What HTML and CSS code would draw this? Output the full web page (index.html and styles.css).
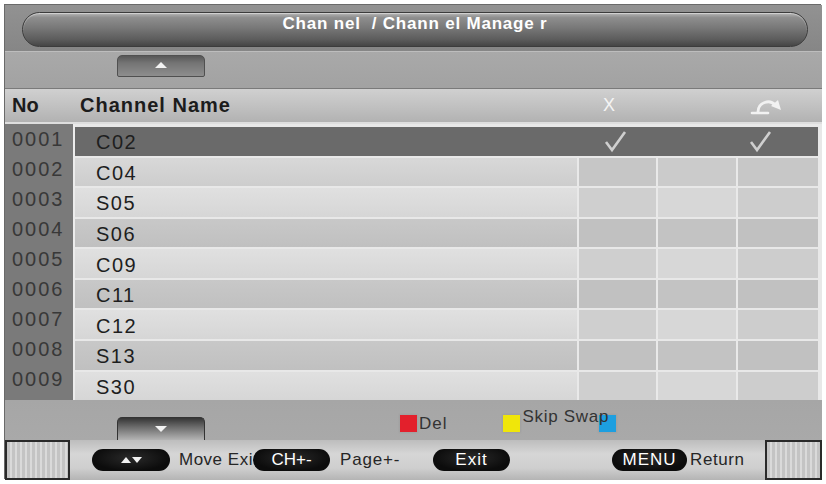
FILE: index.html
```html
<!DOCTYPE html>
<html>
<head>
<meta charset="utf-8">
<title>Channel Manager</title>
<link rel="stylesheet" href="styles.css">
</head>
<body>
<div class="frame">
  <div class="titlebar">
    <div class="pill">Chan nel &nbsp;/ Chann el Manage r</div>
  </div>
  <div class="upband">
    <div class="tab tab-up"><span class="tri tri-up"></span></div>
  </div>
  <div class="header">
    <div class="h-no">No</div>
    <div class="h-name">Channel Name</div>
    <div class="h-x">X</div>
    <div class="h-c2"></div>
    <div class="h-swap">
      <svg width="34" height="20" viewBox="0 0 34 20">
        <path d="M2 17 H18" stroke="#f2f2f2" stroke-width="2.6" fill="none" stroke-linecap="round"/>
        <path d="M8 16 C8 6 20 3 25 9" stroke="#f2f2f2" stroke-width="2.8" fill="none" stroke-linecap="round"/>
        <path d="M21 10 L31 14 L28 4 Z" fill="#f2f2f2"/>
      </svg>
    </div>
  </div>
  <div class="body">
    <div class="nums">
      <div class="num">0001</div>
      <div class="num">0002</div>
      <div class="num">0003</div>
      <div class="num">0004</div>
      <div class="num">0005</div>
      <div class="num">0006</div>
      <div class="num">0007</div>
      <div class="num">0008</div>
      <div class="num">0009</div>
    </div>
    <div class="list">
      <div class="row sel">
        <div class="name">C02</div>
        <div class="c c1"><svg class="check" width="24" height="24" viewBox="0 0 24 24"><path d="M3 13 L9 21 L22 3" stroke="#cfcfcf" stroke-width="2.6" fill="none"/></svg></div>
        <div class="c c2"></div>
        <div class="c c3"><svg class="check" width="24" height="24" viewBox="0 0 24 24"><path d="M3 13 L9 21 L22 3" stroke="#cfcfcf" stroke-width="2.6" fill="none"/></svg></div>
      </div>
      <div class="row md"><div class="name">C04</div><div class="c c1"></div><div class="c c2"></div><div class="c c3"></div></div>
      <div class="row lt"><div class="name">S05</div><div class="c c1"></div><div class="c c2"></div><div class="c c3"></div></div>
      <div class="row dk"><div class="name">S06</div><div class="c c1"></div><div class="c c2"></div><div class="c c3"></div></div>
      <div class="row lt"><div class="name">C09</div><div class="c c1"></div><div class="c c2"></div><div class="c c3"></div></div>
      <div class="row dk"><div class="name">C11</div><div class="c c1"></div><div class="c c2"></div><div class="c c3"></div></div>
      <div class="row lt"><div class="name">C12</div><div class="c c1"></div><div class="c c2"></div><div class="c c3"></div></div>
      <div class="row dk"><div class="name">S13</div><div class="c c1"></div><div class="c c2"></div><div class="c c3"></div></div>
      <div class="row lt"><div class="name">S30</div><div class="c c1"></div><div class="c c2"></div><div class="c c3"></div></div>
    </div>
  </div>
  <div class="downband">
    <div class="tab tab-down"><span class="tri tri-down"></span></div>
    <span class="sw sw-red"></span>
    <span class="lg lg-del">Del</span>
    <span class="sw sw-yellow"></span>
    <span class="lg lg-skip">Skip Swap</span>
    <span class="sw sw-blue"></span>
  </div>
  <div class="footer">
    <div class="box"></div>
    <div class="btn btn-arrows"><span class="tri tri-up"></span><span class="tri tri-down"></span></div>
    <span class="ft ft-move">Move Exi</span>
    <div class="btn btn-ch">CH+-</div>
    <span class="ft ft-page">Page+-</span>
    <div class="btn btn-exit">Exit</div>
    <div class="btn btn-menu">MENU</div>
    <span class="ft ft-return">Return</span>
    <div class="box box-right"></div>
  </div>
</div>
</body>
</html>
```
FILE: styles.css
```css
* { box-sizing: border-box; }

body {
  margin: 0;
  background: #ffffff;
  font-family: "Liberation Sans", Arial, sans-serif;
}

.frame {
  margin: 5px 0 0 5px;
  width: 817px;
  height: 475px;
  display: flex;
  flex-direction: column;
  background: #a6a6a6;
  box-shadow: -1px -1px 0 #6a6a6a;
}

/* title */
.titlebar {
  height: 47px;
  flex: none;
  padding: 7px 14px 5px 17px;
  background: linear-gradient(#929292, #868686);
  border-bottom: 1px solid #bdbdbd;
}

.pill {
  height: 35px;
  border-radius: 18px;
  border: 1px solid #3c3c3c;
  background: linear-gradient(#b4b4b4 0%, #8e8e8e 14%, #787878 45%, #5c5c5c 80%, #454545 100%);
  box-shadow: inset 0 1px 1px rgba(255,255,255,0.45);
  color: #ffffff;
  font-weight: bold;
  font-size: 17px;
  line-height: 20px;
  padding-top: 1px;
  text-align: center;
  letter-spacing: 0.8px;
}

/* up band */
.upband {
  height: 36px;
  flex: none;
  padding: 3px 0 0 112px;
  background: linear-gradient(#a9a9a9, #a2a2a2);
}

.tab {
  width: 88px;
  display: flex;
  justify-content: center;
}

.tab-up {
  height: 22px;
  padding-top: 6px;
  border-radius: 5px 5px 2px 2px;
  border: 1px solid #505050;
  background: linear-gradient(#575757 0%, #747474 35%, #8e8e8e 100%);
}

.tri {
  display: inline-block;
  width: 0;
  height: 0;
  border-left: 6px solid transparent;
  border-right: 6px solid transparent;
}

.tri-up { border-bottom: 6px solid #f2f2f2; }
.tri-down { border-top: 6px solid #f2f2f2; }

/* header */
.header {
  height: 36px;
  flex: none;
  display: grid;
  grid-template-columns: 68px 504px 79px 80px 82px 4px;
  align-items: center;
  background: linear-gradient(#d0d0d0, #c0c0c0 55%, #b2b2b2);
  border-top: 1px solid #7a7a7a;
  border-bottom: 2px solid #dedede;
  font-size: 20px;
  color: #1c1c1c;
}

.h-no { padding-left: 7px; font-weight: bold; }
.h-name { padding-left: 7px; font-weight: bold; letter-spacing: 1px; }
.h-x { padding-left: 26px; color: #f4f4f4; font-size: 18px; }
.h-swap { padding-left: 14px; display: flex; }

/* body */
.body {
  height: 276px;
  flex: none;
  display: flex;
}

.nums {
  width: 68px;
  flex: none;
  background: #7a7a7a;
  display: flex;
  flex-direction: column;
}

.num {
  height: 30px;
  line-height: 30px;
  padding-left: 7px;
  font-size: 20px;
  letter-spacing: 2px;
  color: #383838;
}

.list {
  flex: 1;
  display: flex;
  flex-direction: column;
  gap: 2px;
  padding: 3px 4px 0 0;
  border-left: 2px solid #ececec;
  background: #e8e8e8;
}

.row {
  flex: 1;
  display: grid;
  grid-template-columns: 502px 79px 80px 82px;
}

.name {
  display: flex;
  align-items: center;
  padding: 3px 0 0 21px;
  font-size: 20px;
  letter-spacing: 1.5px;
  color: #1e1e1e;
}

.c {
  display: flex;
  align-items: center;
  border-left: 2px solid #e9e9e9;
}

.sel { background: #6a6a6a; }
.sel .c { border-left: none; }
.sel .c1 { padding-left: 26px; }
.sel .c3 { padding-left: 12px; }

.md .name { background: linear-gradient(#d8d8d8, #cdcdcd); }
.md .c1 { background: #c6c6c6; }
.md .c2 { background: #cbcbcb; }
.md .c3 { background: #c7c7c7; }

.lt .name { background: linear-gradient(#e0e0e0, #d6d6d6); }
.lt .c1 { background: #cfcfcf; }
.lt .c2 { background: #d7d7d7; }
.lt .c3 { background: #cdcdcd; }

.dk .name { background: linear-gradient(#c8c8c8, #c0c0c0); }
.dk .c1 { background: #c1c1c1; }
.dk .c2 { background: #c3c3c3; }
.dk .c3 { background: #c1c1c1; }

/* down band */
.downband {
  height: 40px;
  flex: none;
  display: flex;
  align-items: flex-start;
  padding-left: 112px;
  background: linear-gradient(#a6a6a6, #a9a9a9);
}

.tab-down {
  margin-top: 17px;
  height: 23px;
  padding-top: 8px;
  border-radius: 5px 5px 0 0;
  border: 1px solid #333333;
  border-bottom: none;
  background: linear-gradient(#353535 0%, #6a6a6a 40%, #b4b4b4 100%);
}

.sw {
  display: inline-block;
  width: 17px;
  height: 17px;
  margin-top: 15px;
  box-shadow: 0 0 2px 1px rgba(0,0,0,0.05);
}

.sw-red { margin-left: 195px; background: #e3202c; }
.sw-yellow { margin-left: 55px; background: #f0e60a; }
.sw-blue { margin-left: -10px; background: #1d9fe0; }

.lg {
  font-size: 17px;
  color: #333333;
  line-height: 20px;
}

.lg-del { margin: 14px 0 0 2px; letter-spacing: 1px; }
.lg-skip { margin: 7px 0 0 3px; letter-spacing: 0.7px; position: relative; z-index: 1; }

/* footer */
.footer {
  height: 40px;
  flex: none;
  display: flex;
  align-items: center;
  background: linear-gradient(#bdbdbd, #d6d6d6 35%, #cfcfcf 70%, #b4b4b4);
}

.box {
  width: 65px;
  height: 40px;
  flex: none;
  border: 2px solid #2a2a2a;
  background: repeating-linear-gradient(90deg, #c4c4c4 0 3px, #dadada 3px 5px);
}

.box-right { width: 57px; margin-left: auto; }

.btn {
  height: 22px;
  border-radius: 11px;
  background: radial-gradient(ellipse at 50% 40%, #2a2a2a, #0c0c0c 70%);
  color: #ffffff;
  font-size: 17px;
  line-height: 22px;
  text-align: center;
  flex: none;
}

.btn-arrows {
  width: 78px;
  margin-left: 22px;
  display: flex;
  align-items: center;
  justify-content: center;
  gap: 1px;
}

.btn-arrows .tri { border-left-width: 5px; border-right-width: 5px; }

.btn-ch { width: 77px; }
.btn-exit { width: 77px; margin-left: 33px; letter-spacing: 1px; }
.btn-menu { width: 75px; margin-left: 102px; letter-spacing: 1px; }

.ft {
  font-size: 17px;
  color: #262626;
  white-space: nowrap;
  flex: none;
}

.ft-move { width: 74px; margin-left: 9px; letter-spacing: 0.5px; }
.ft-page { width: 60px; margin-left: 10px; letter-spacing: 0.8px; }
.ft-return { margin-left: 3px; letter-spacing: 0.6px; }
```
